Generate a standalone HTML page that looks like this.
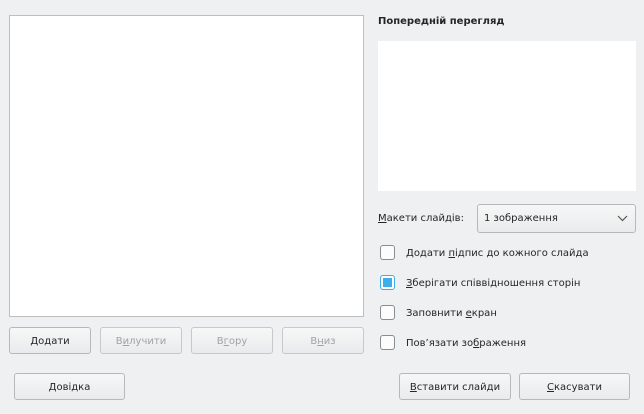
<!DOCTYPE html>
<html><head><meta charset="utf-8"><style>
body{margin:0;width:644px;height:414px;background:#eff0f1;font-family:"DejaVu Sans","Liberation Sans",sans-serif;font-size:10px;color:#232627;position:relative;overflow:hidden}
.a{position:absolute}
.btn{position:absolute;box-sizing:border-box;border:1px solid #b6b9bb;border-radius:3px;background:linear-gradient(#f6f7f7,#eaebec);text-align:center;font-size:10px;line-height:27px}
.dis{color:#a0a3a5;border-color:#c6c8ca}
.cb{position:absolute;left:380px;width:15px;height:15px;box-sizing:border-box;border:1px solid #8a8d8f;border-radius:3px;background:#fcfcfc}
.lbl{position:absolute;left:406px;font-size:10px}
u{text-decoration:underline}
</style></head><body>
<div class="a" style="left:9px;top:15px;width:355px;height:302px;background:#fff;border:1px solid #bcbec0;box-sizing:border-box"></div>
<div class="btn" style="left:9px;top:327px;width:82px;height:27px"><u>Д</u>одати</div>
<div class="btn dis" style="left:100px;top:327px;width:82px;height:27px">В<u>и</u>лучити</div>
<div class="btn dis" style="left:191px;top:327px;width:82px;height:27px">В<u>г</u>ору</div>
<div class="btn dis" style="left:282px;top:327px;width:82px;height:27px">В<u>н</u>из</div>
<div class="btn" style="left:14px;top:373px;width:111px;height:27px"><u>Д</u>овідка</div>
<div class="btn" style="left:399px;top:373px;width:112px;height:27px"><u>В</u>ставити слайди</div>
<div class="btn" style="left:519px;top:373px;width:111px;height:27px"><u>С</u>касувати</div>
<div class="a" style="left:378px;top:16px;font-weight:bold;font-size:10px">Попередній перегляд</div>
<div class="a" style="left:378px;top:41px;width:258px;height:150px;background:#fff"></div>
<div class="a" style="left:378px;top:213px"><u>М</u>акети слайдів:</div>
<div class="btn" style="left:477px;top:204px;width:159px;height:29px;text-align:left;padding-left:6px;line-height:28px">1 зображення
<svg class="a" style="right:7px;top:10px" width="11" height="7"><path d="M1 1L5.5 5.5L10 1" fill="none" stroke="#555" stroke-width="1.2"/></svg></div>
<div class="cb" style="top:245px"></div><div class="lbl" style="top:248px">Додати <u>п</u>ідпис до кожного слайда</div>
<div class="cb" style="top:275px;border-color:#3daee9"><div class="a" style="left:2px;top:2px;width:9px;height:9px;background:#3daee9"></div></div><div class="lbl" style="top:278px"><u>З</u>берігати співвідношення сторін</div>
<div class="cb" style="top:305px"></div><div class="lbl" style="top:308px">Заповнити <u>е</u>кран</div>
<div class="cb" style="top:335px"></div><div class="lbl" style="top:338px">Пов’язати зо<u>б</u>раження</div>
</body></html>
